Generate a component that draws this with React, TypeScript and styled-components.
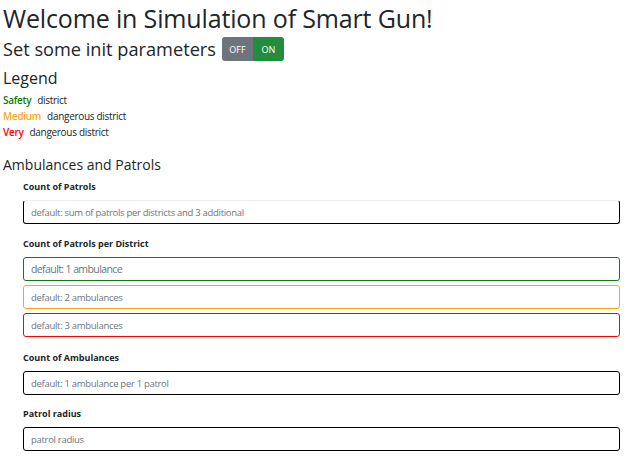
import React from "react";
import styled, { createGlobalStyle } from "styled-components";

const Global = createGlobalStyle`
  html, body { margin: 0; padding: 0; background: #fff; }
  body { font-family: "Open Sans", "Noto Sans", sans-serif; color: #212529; }
`;

const Page = styled.div`
  width: 628px;
  padding: 0 3px;
  box-sizing: border-box;
`;

const Title = styled.h1`
  margin: 2px 0 0;
  font-size: 25px;
  line-height: 32px;
  font-weight: 500;
  letter-spacing: -0.15px;
`;

const ParamRow = styled.div`
  display: flex;
  align-items: center;
  gap: 6px;
  margin-top: 3px;
`;

const Subtitle = styled.h2`
  margin: 0;
  font-size: 18.2px;
  line-height: 24px;
  font-weight: 400;
`;

const Toggle = styled.div`
  display: flex;
  border-radius: 3px;
  overflow: hidden;
  height: 24px;
`;

const ToggleBtn = styled.span<{ $on?: boolean }>`
  width: 31px;
  display: flex;
  align-items: center;
  justify-content: center;
  font-size: 9px;
  color: #fff;
  background: ${(p) => (p.$on ? "#238c3e" : "#6c757d")};
`;

const LegendTitle = styled.h3`
  margin: 6px 0 0;
  font-size: 16px;
  line-height: 22px;
  font-weight: 400;
`;

const LegendList = styled.div`
  margin-top: 3px;
  display: flex;
  flex-direction: column;
`;

const LegendLine = styled.div`
  font-size: 10px;
  line-height: 16px;
  letter-spacing: -0.3px;
`;

const Level = styled.span<{ $c: string }>`
  color: ${(p) => p.$c};
  font-weight: 600;
  margin-right: 6px;
`;

const Section = styled.h4`
  margin: 15px 0 0;
  font-size: 14px;
  line-height: 20px;
  font-weight: 400;
`;

const Form = styled.div`
  padding-left: 20px;
  padding-right: 5px;
`;

const Label = styled.div<{ $first?: boolean; $after?: number }>`
  font-size: 9px;
  font-weight: 700;
  line-height: 14px;
  margin: ${(p) => (p.$first ? 5 : p.$after ?? 12)}px 0 6px;
`;

const Stack = styled.div`
  display: flex;
  flex-direction: column;
  gap: 4px;
`;

const Input = styled.input<{ $c?: string; $big?: boolean; $noTop?: boolean }>`
  display: block;
  width: 100%;
  box-sizing: border-box;
  height: 24px;
  border: 1.5px solid ${(p) => p.$c || "#000"};
  ${(p) => (p.$noTop ? "border-top-color: #eee;" : "")}
  border-radius: 3px;
  padding: 0 7px;
  font-family: "Open Sans", "Noto Sans", sans-serif;
  font-size: ${(p) => (p.$big ? "10.5px" : "9.5px")};
  letter-spacing: ${(p) => (p.$big ? "-0.6px" : "-0.3px")};
  outline: none;
  &::placeholder {
    color: #6c757d;
  }
`;

export default function App() {
  return (
    <Page>
      <Global />
      <Title>Welcome in Simulation of Smart Gun!</Title>
      <ParamRow>
        <Subtitle>Set some init parameters</Subtitle>
        <Toggle>
          <ToggleBtn>OFF</ToggleBtn>
          <ToggleBtn $on>ON</ToggleBtn>
        </Toggle>
      </ParamRow>
      <LegendTitle>Legend</LegendTitle>
      <LegendList>
        <LegendLine>
          <Level $c="#0a7a0a">Safety</Level>district
        </LegendLine>
        <LegendLine>
          <Level $c="#ffa51f">Medium</Level>dangerous district
        </LegendLine>
        <LegendLine>
          <Level $c="#ff0000">Very</Level>dangerous district
        </LegendLine>
      </LegendList>
      <Section>Ambulances and Patrols</Section>
      <Form>
        <Label $first>Count of Patrols</Label>
        <Input $noTop placeholder="default: sum of patrols per districts and 3 additional" />
        <Label $after={13}>Count of Patrols per District</Label>
        <Stack>
          <Input $c="#117d11" $big placeholder="default: 1 ambulance" />
          <Input $c="#ffaa00" placeholder="default: 2 ambulances" />
          <Input $c="#ff0000" placeholder="default: 3 ambulances" />
        </Stack>
        <Label $after={14}>Count of Ambulances</Label>
        <Input placeholder="default: 1 ambulance per 1 patrol" />
        <Label>Patrol radius</Label>
        <Input placeholder="patrol radius" />
      </Form>
    </Page>
  );
}
